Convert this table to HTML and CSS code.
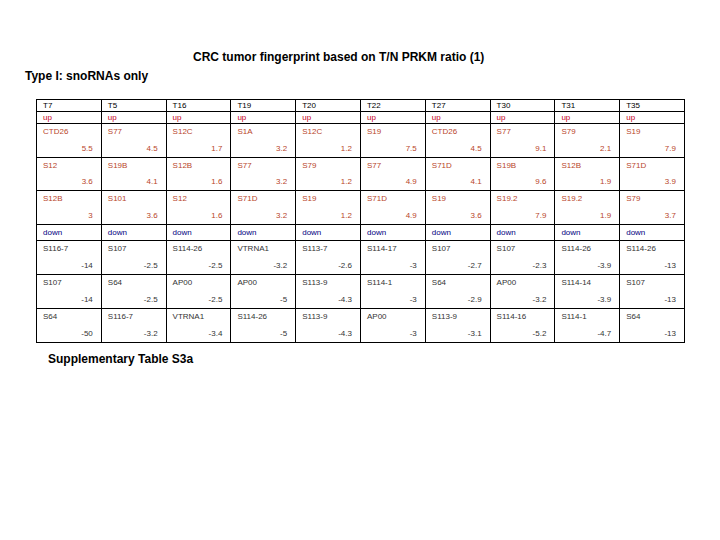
FILE: index.html
```html
<!DOCTYPE html>
<html>
<head>
<meta charset="utf-8">
<link rel="stylesheet" href="styles.css">
</head>
<body>
<div class="title">CRC tumor fingerprint based on T/N PRKM ratio (1)</div>
<div class="subtitle">Type I: snoRNAs only</div>
<div class="grid">
  <div class="c h">T7</div><div class="c h">T5</div><div class="c h">T16</div><div class="c h">T19</div><div class="c h">T20</div><div class="c h">T22</div><div class="c h">T27</div><div class="c h">T30</div><div class="c h">T31</div><div class="c h">T35</div>

  <div class="c dir up">up</div><div class="c dir up">up</div><div class="c dir up">up</div><div class="c dir up">up</div><div class="c dir up">up</div><div class="c dir up">up</div><div class="c dir up">up</div><div class="c dir up">up</div><div class="c dir up">up</div><div class="c dir up">up</div>

  <div class="c d u"><span>CTD26</span><span class="v">5.5</span></div>
  <div class="c d u"><span>S77</span><span class="v">4.5</span></div>
  <div class="c d u"><span>S12C</span><span class="v">1.7</span></div>
  <div class="c d u"><span>S1A</span><span class="v">3.2</span></div>
  <div class="c d u"><span>S12C</span><span class="v">1.2</span></div>
  <div class="c d u"><span>S19</span><span class="v">7.5</span></div>
  <div class="c d u"><span>CTD26</span><span class="v">4.5</span></div>
  <div class="c d u"><span>S77</span><span class="v">9.1</span></div>
  <div class="c d u"><span>S79</span><span class="v">2.1</span></div>
  <div class="c d u"><span>S19</span><span class="v">7.9</span></div>

  <div class="c d u"><span>S12</span><span class="v">3.6</span></div>
  <div class="c d u"><span>S19B</span><span class="v">4.1</span></div>
  <div class="c d u"><span>S12B</span><span class="v">1.6</span></div>
  <div class="c d u"><span>S77</span><span class="v">3.2</span></div>
  <div class="c d u"><span>S79</span><span class="v">1.2</span></div>
  <div class="c d u"><span>S77</span><span class="v">4.9</span></div>
  <div class="c d u"><span>S71D</span><span class="v">4.1</span></div>
  <div class="c d u"><span>S19B</span><span class="v">9.6</span></div>
  <div class="c d u"><span>S12B</span><span class="v">1.9</span></div>
  <div class="c d u"><span>S71D</span><span class="v">3.9</span></div>

  <div class="c d u"><span>S12B</span><span class="v">3</span></div>
  <div class="c d u"><span>S101</span><span class="v">3.6</span></div>
  <div class="c d u"><span>S12</span><span class="v">1.6</span></div>
  <div class="c d u"><span>S71D</span><span class="v">3.2</span></div>
  <div class="c d u"><span>S19</span><span class="v">1.2</span></div>
  <div class="c d u"><span>S71D</span><span class="v">4.9</span></div>
  <div class="c d u"><span>S19</span><span class="v">3.6</span></div>
  <div class="c d u"><span>S19.2</span><span class="v">7.9</span></div>
  <div class="c d u"><span>S19.2</span><span class="v">1.9</span></div>
  <div class="c d u"><span>S79</span><span class="v">3.7</span></div>

  <div class="c dir down">down</div><div class="c dir down">down</div><div class="c dir down">down</div><div class="c dir down">down</div><div class="c dir down">down</div><div class="c dir down">down</div><div class="c dir down">down</div><div class="c dir down">down</div><div class="c dir down">down</div><div class="c dir down">down</div>

  <div class="c d n"><span>S116-7</span><span class="v">-14</span></div>
  <div class="c d n"><span>S107</span><span class="v">-2.5</span></div>
  <div class="c d n"><span>S114-26</span><span class="v">-2.5</span></div>
  <div class="c d n"><span>VTRNA1</span><span class="v">-3.2</span></div>
  <div class="c d n"><span>S113-7</span><span class="v">-2.6</span></div>
  <div class="c d n"><span>S114-17</span><span class="v">-3</span></div>
  <div class="c d n"><span>S107</span><span class="v">-2.7</span></div>
  <div class="c d n"><span>S107</span><span class="v">-2.3</span></div>
  <div class="c d n"><span>S114-26</span><span class="v">-3.9</span></div>
  <div class="c d n"><span>S114-26</span><span class="v">-13</span></div>

  <div class="c d n"><span>S107</span><span class="v">-14</span></div>
  <div class="c d n"><span>S64</span><span class="v">-2.5</span></div>
  <div class="c d n"><span>AP00</span><span class="v">-2.5</span></div>
  <div class="c d n"><span>AP00</span><span class="v">-5</span></div>
  <div class="c d n"><span>S113-9</span><span class="v">-4.3</span></div>
  <div class="c d n"><span>S114-1</span><span class="v">-3</span></div>
  <div class="c d n"><span>S64</span><span class="v">-2.9</span></div>
  <div class="c d n"><span>AP00</span><span class="v">-3.2</span></div>
  <div class="c d n"><span>S114-14</span><span class="v">-3.9</span></div>
  <div class="c d n"><span>S107</span><span class="v">-13</span></div>

  <div class="c d n"><span>S64</span><span class="v">-50</span></div>
  <div class="c d n"><span>S116-7</span><span class="v">-3.2</span></div>
  <div class="c d n"><span>VTRNA1</span><span class="v">-3.4</span></div>
  <div class="c d n"><span>S114-26</span><span class="v">-5</span></div>
  <div class="c d n"><span>S113-9</span><span class="v">-4.3</span></div>
  <div class="c d n"><span>AP00</span><span class="v">-3</span></div>
  <div class="c d n"><span>S113-9</span><span class="v">-3.1</span></div>
  <div class="c d n"><span>S114-16</span><span class="v">-5.2</span></div>
  <div class="c d n"><span>S114-1</span><span class="v">-4.7</span></div>
  <div class="c d n"><span>S64</span><span class="v">-13</span></div>
</div>
<div class="caption">Supplementary Table S3a</div>
</body>
</html>
```

FILE: styles.css
```css
html, body {
  margin: 0;
  padding: 0;
  background: #fff;
}
body {
  font-family: "Liberation Sans", Arial, sans-serif;
  color: #000;
  width: 720px;
  height: 540px;
  overflow: hidden;
}
.title {
  font-weight: bold;
  font-size: 12px;
  line-height: 14px;
  padding-top: 50px;
  margin-left: 193px;
}
.subtitle {
  font-weight: bold;
  font-size: 12px;
  line-height: 14px;
  margin-top: 5px;
  margin-left: 25px;
}
.grid {
  margin-top: 16px;
  margin-left: 36px;
  width: 647px;
  display: grid;
  grid-template-columns: repeat(10, 1fr);
  grid-template-rows: 11px 11px 33px 32px 33px 15px 33px 33px 33px;
  gap: 1px;
  background: #000;
  border: 1px solid #000;
}
.c {
  background: #fff;
  font-size: 8px;
  padding: 0 8px 0 6px;
  white-space: nowrap;
  overflow: hidden;
}
.h {
  line-height: 11px;
  color: #000;
}
.dir {
  display: flex;
  align-items: center;
}
.up {
  color: #c4001a;
}
.down {
  color: #000080;
}
.d {
  display: flex;
  flex-direction: column;
  justify-content: space-between;
  line-height: 12px;
  padding-top: 2px;
  padding-bottom: 2px;
}
.v {
  text-align: right;
}
.u {
  color: #b8452a;
}
.n {
  color: #333;
}
.caption {
  font-weight: bold;
  font-size: 12px;
  line-height: 14px;
  margin-top: 9px;
  margin-left: 48px;
}
```
